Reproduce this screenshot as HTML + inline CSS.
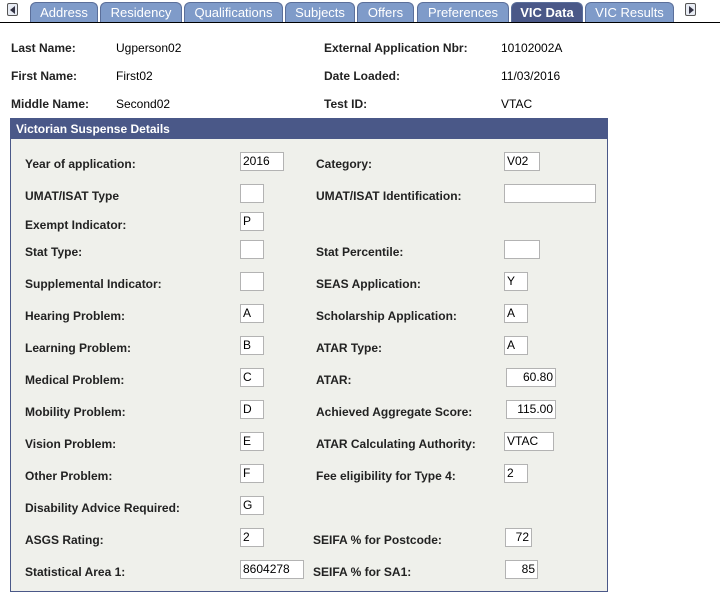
<!DOCTYPE html><html><head><style>
body{margin:0;width:720px;height:598px;background:#fff;font-family:"Liberation Sans",Arial,sans-serif;font-size:12px;color:#000;position:relative;overflow:hidden}
.a{position:absolute;white-space:nowrap}
.b{font-weight:bold;color:#222;margin-top:1px}
.tab{position:absolute;top:2px;height:20px;background:#7f9bc9;color:#fff;border:1px solid #5b6f9a;border-bottom:none;border-radius:6px 6px 0 0;font-size:13px;line-height:20px;text-align:center;box-sizing:border-box}
.in{position:absolute;height:19px;background:#fff;border:1px solid #b3b3b3;box-sizing:border-box;font-size:12px;line-height:17px;padding:0 2px}
.r{text-align:right}
</style></head><body>
<div class="a" style="left:0;top:22px;width:720px;height:1px;background:#000"></div>
<div class="a" style="left:7px;top:3px;width:11px;height:13px;border:1px solid #555;background:#e8ecf4;box-sizing:border-box;border-radius:2px"></div>
<div class="a" style="left:10px;top:6px;width:0;height:0;border-top:4px solid transparent;border-bottom:4px solid transparent;border-right:5px solid #334"></div>
<div class="tab" style="left:30px;width:68px">Address</div>
<div class="tab" style="left:100px;width:82px">Residency</div>
<div class="tab" style="left:184px;width:99px">Qualifications</div>
<div class="tab" style="left:285px;width:70px">Subjects</div>
<div class="tab" style="left:357px;width:57px">Offers</div>
<div class="tab" style="left:417px;width:92px">Preferences</div>
<div class="tab" style="left:511px;width:72px;background:#4a5888;font-weight:bold">VIC Data</div>
<div class="tab" style="left:585px;width:89px">VIC Results</div>
<div class="a" style="left:685px;top:3px;width:11px;height:13px;border:1px solid #555;background:#e8ecf4;box-sizing:border-box;border-radius:2px"></div>
<div class="a" style="left:689px;top:6px;width:0;height:0;border-top:4px solid transparent;border-bottom:4px solid transparent;border-left:5px solid #334"></div>

<div class="a b" style="left:11px;top:40px">Last Name:</div><div class="a" style="left:116px;top:41px">Ugperson02</div>
<div class="a b" style="left:11px;top:68px">First Name:</div><div class="a" style="left:116px;top:69px">First02</div>
<div class="a b" style="left:11px;top:96px">Middle Name:</div><div class="a" style="left:116px;top:97px">Second02</div>
<div class="a b" style="left:324px;top:40px">External Application Nbr:</div><div class="a" style="left:501px;top:41px">10102002A</div>
<div class="a b" style="left:324px;top:68px">Date Loaded:</div><div class="a" style="left:501px;top:69px">11/03/2016</div>
<div class="a b" style="left:324px;top:96px">Test ID:</div><div class="a" style="left:501px;top:97px">VTAC</div>

<div class="a" style="left:10px;top:118px;width:598px;height:474px;border:1px solid #4a5888;background:#eff0eb;box-sizing:border-box"></div>
<div class="a" style="left:10px;top:118px;width:598px;height:21px;background:#4a5888;color:#fff;font-weight:bold;line-height:22px;padding-left:6px;box-sizing:border-box">Victorian Suspense Details</div>

<div class="a b" style="left:25px;top:156px">Year of application:</div><div class="in" style="left:240px;top:152px;width:44px">2016</div>
<div class="a b" style="left:316px;top:156px">Category:</div><div class="in" style="left:504px;top:152px;width:36px">V02</div>
<div class="a b" style="left:25px;top:188px">UMAT/ISAT Type</div><div class="in" style="left:240px;top:184px;width:24px"></div>
<div class="a b" style="left:316px;top:188px">UMAT/ISAT Identification:</div><div class="in" style="left:504px;top:184px;width:92px"></div>
<div class="a b" style="left:25px;top:217px">Exempt Indicator:</div><div class="in" style="left:240px;top:212px;width:24px">P</div>
<div class="a b" style="left:25px;top:244px">Stat Type:</div><div class="in" style="left:240px;top:240px;width:24px"></div>
<div class="a b" style="left:316px;top:244px">Stat Percentile:</div><div class="in" style="left:504px;top:240px;width:36px"></div>
<div class="a b" style="left:25px;top:276px">Supplemental Indicator:</div><div class="in" style="left:240px;top:272px;width:24px"></div>
<div class="a b" style="left:316px;top:276px">SEAS Application:</div><div class="in" style="left:504px;top:272px;width:24px">Y</div>
<div class="a b" style="left:25px;top:308px">Hearing Problem:</div><div class="in" style="left:240px;top:304px;width:24px">A</div>
<div class="a b" style="left:316px;top:308px">Scholarship Application:</div><div class="in" style="left:504px;top:304px;width:24px">A</div>
<div class="a b" style="left:25px;top:340px">Learning Problem:</div><div class="in" style="left:240px;top:336px;width:24px">B</div>
<div class="a b" style="left:316px;top:340px">ATAR Type:</div><div class="in" style="left:504px;top:336px;width:24px">A</div>
<div class="a b" style="left:25px;top:372px">Medical Problem:</div><div class="in" style="left:240px;top:368px;width:24px">C</div>
<div class="a b" style="left:316px;top:372px">ATAR:</div><div class="in r" style="left:506px;top:368px;width:50px">60.80</div>
<div class="a b" style="left:25px;top:404px">Mobility Problem:</div><div class="in" style="left:240px;top:400px;width:24px">D</div>
<div class="a b" style="left:316px;top:404px">Achieved Aggregate Score:</div><div class="in r" style="left:506px;top:400px;width:50px">115.00</div>
<div class="a b" style="left:25px;top:436px">Vision Problem:</div><div class="in" style="left:240px;top:432px;width:24px">E</div>
<div class="a b" style="left:316px;top:436px">ATAR Calculating Authority:</div><div class="in" style="left:504px;top:432px;width:50px">VTAC</div>
<div class="a b" style="left:25px;top:468px">Other Problem:</div><div class="in" style="left:240px;top:464px;width:24px">F</div>
<div class="a b" style="left:316px;top:468px">Fee eligibility for Type 4:</div><div class="in" style="left:504px;top:464px;width:24px">2</div>
<div class="a b" style="left:25px;top:500px">Disability Advice Required:</div><div class="in" style="left:240px;top:496px;width:24px">G</div>
<div class="a b" style="left:25px;top:532px">ASGS Rating:</div><div class="in" style="left:240px;top:528px;width:24px">2</div>
<div class="a b" style="left:313px;top:532px">SEIFA % for Postcode:</div><div class="in r" style="left:505px;top:528px;width:27px">72</div>
<div class="a b" style="left:25px;top:564px">Statistical Area 1:</div><div class="in" style="left:240px;top:560px;width:64px">8604278</div>
<div class="a b" style="left:313px;top:564px">SEIFA % for SA1:</div><div class="in r" style="left:505px;top:560px;width:33px">85</div>
</body></html>
